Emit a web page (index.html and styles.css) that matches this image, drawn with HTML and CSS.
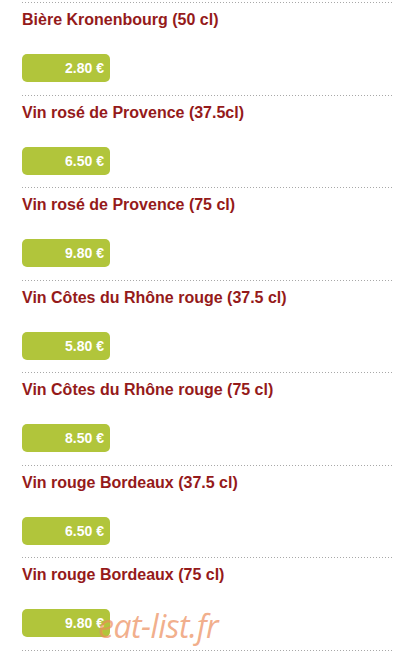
FILE: index.html
```html
<!DOCTYPE html>
<html lang="fr">
<head>
<meta charset="utf-8">
<link rel="stylesheet" href="styles.css">
</head>
<body>
<div class="menu">
  <div class="item">
    <h3 class="name">Bière Kronenbourg (50 cl)</h3>
    <div class="price">2.80 €</div>
  </div>
  <div class="item">
    <h3 class="name">Vin rosé de Provence (37.5cl)</h3>
    <div class="price">6.50 €</div>
  </div>
  <div class="item">
    <h3 class="name">Vin rosé de Provence (75 cl)</h3>
    <div class="price">9.80 €</div>
  </div>
  <div class="item">
    <h3 class="name">Vin Côtes du Rhône rouge (37.5 cl)</h3>
    <div class="price">5.80 €</div>
  </div>
  <div class="item">
    <h3 class="name">Vin Côtes du Rhône rouge (75 cl)</h3>
    <div class="price">8.50 €</div>
  </div>
  <div class="item">
    <h3 class="name">Vin rouge Bordeaux (37.5 cl)</h3>
    <div class="price">6.50 €</div>
  </div>
  <div class="item">
    <h3 class="name">Vin rouge Bordeaux (75 cl)</h3>
    <div class="price">9.80 €</div>
  </div>
  <div class="end-line"></div>
</div>
<div class="watermark">eat-list.fr</div>
</body>
</html>
```
FILE: styles.css
```css
html, body {
  margin: 0;
  padding: 0;
  background: #ffffff;
}
body {
  font-family: "Liberation Sans", Arial, sans-serif;
  position: relative;
  height: 653px;
  overflow: hidden;
}
.menu {
  display: flex;
  flex-direction: column;
  margin: 2px 19px 0 22px;
}
.item {
  height: 92.5px;
  box-sizing: border-box;
  display: flex;
  flex-direction: column;
  align-items: flex-start;
  background-image: linear-gradient(to right, #a8a8a8 1px, transparent 1px);
  background-size: 3px 1px;
  background-repeat: repeat-x;
  background-position: 0 0;
  padding-top: 8px;
}
.name {
  margin: 0;
  font-family: "Liberation Sans", Arial, sans-serif;
  font-size: 16px;
  line-height: 19px;
  font-weight: bold;
  color: #951a1a;
}
.price {
  margin-top: 25px;
  width: 88px;
  height: 28px;
  box-sizing: border-box;
  border-radius: 5px;
  background: #b1c53b;
  color: #ffffff;
  font-family: "Liberation Sans", Arial, sans-serif;
  font-weight: bold;
  font-size: 14px;
  line-height: 28px;
  text-align: right;
  padding-right: 6px;
}
.end-line {
  height: 1px;
  background-image: linear-gradient(to right, #a8a8a8 1px, transparent 1px);
  background-size: 3px 1px;
  background-repeat: repeat-x;
}
.watermark {
  position: absolute;
  left: 98px;
  top: 606px;
  font-family: "Open Sans", sans-serif;
  font-style: italic;
  font-size: 32px;
  line-height: 40px;
  color: rgba(236, 140, 90, 0.7);
  letter-spacing: -0.5px;
}
```
